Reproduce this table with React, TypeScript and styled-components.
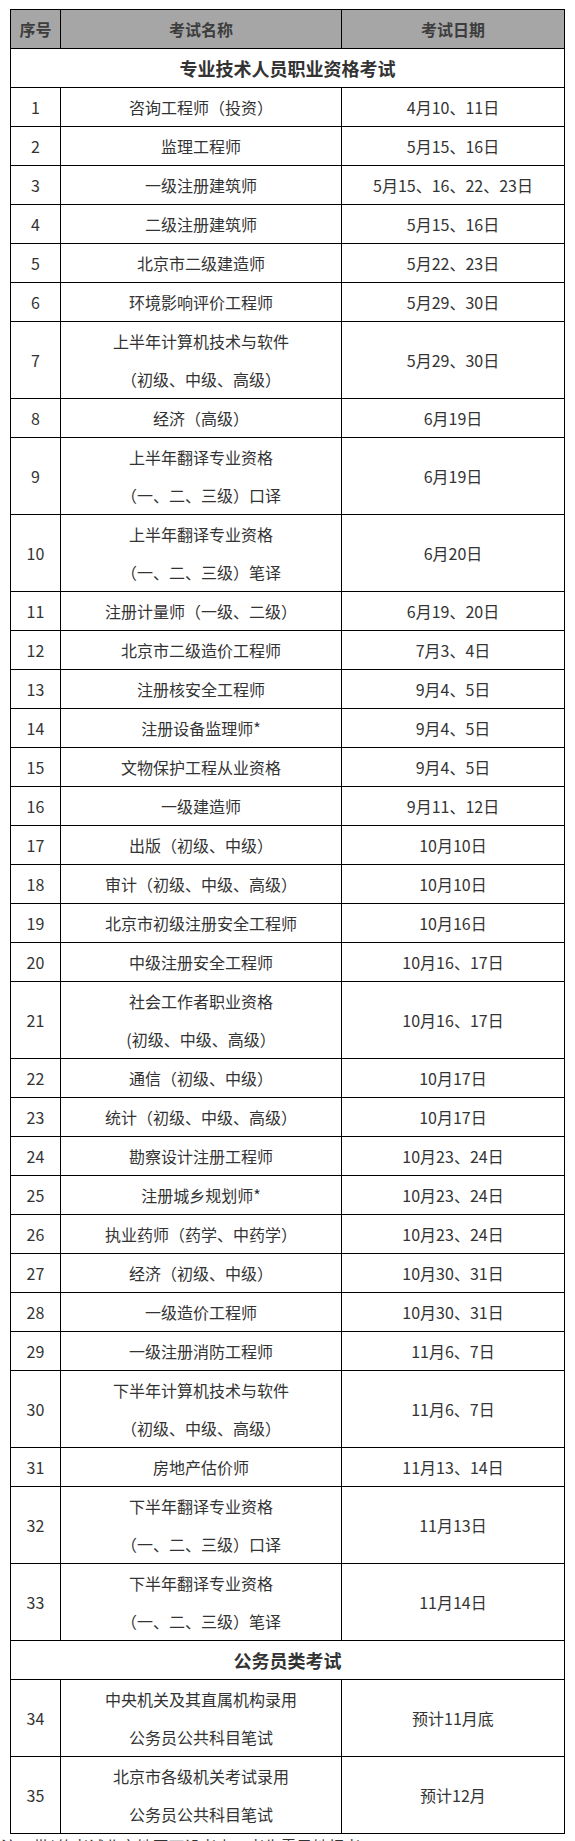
import React from "react";
import styled, { createGlobalStyle } from "styled-components";

const GlobalStyle = createGlobalStyle`
  html, body {
    margin: 0;
    padding: 0;
    background: #ffffff;
  }
  body {
    font-family: "Noto Sans CJK SC", "Microsoft YaHei", sans-serif;
    color: #333333;
  }
`;

const Page = styled.div`
  padding-top: 9px;
  width: 575px;
`;

const Grid = styled.div`
  margin-left: 10px;
  width: 555px;
  box-sizing: border-box;
  display: grid;
  grid-template-columns: 50px 281px 223px;
  border-left: 1px solid #000;
  border-top: 1px solid #000;
`;

const Cell = styled.div<{ $head?: boolean }>`
  box-sizing: border-box;
  border-right: 1px solid #000;
  border-bottom: 1px solid #000;
  min-height: 39px;
  display: flex;
  flex-direction: column;
  align-items: center;
  justify-content: center;
  text-align: center;
  font-size: 16px;
  line-height: 38px;
  white-space: nowrap;
  color: ${(p) => (p.$head ? "#3d3d3d" : "#333333")};
  font-weight: ${(p) => (p.$head ? 700 : 400)};
  background: ${(p) => (p.$head ? "#a6a6a6" : "#ffffff")};
`;

const SectionCell = styled.div`
  grid-column: 1 / span 3;
  box-sizing: border-box;
  border-right: 1px solid #000;
  border-bottom: 1px solid #000;
  height: 39px;
  display: flex;
  align-items: center;
  justify-content: center;
  font-size: 18px;
  font-weight: 700;
  color: #333333;
`;

const Line = styled.span`
  display: block;
  height: 38px;
`;

const Note = styled.p`
  margin: 0;
  padding-left: 1px;
  font-size: 16px;
  line-height: 24px;
  color: #333333;
  white-space: nowrap;
`;

type Row = { no: number; name: string[]; date: string };

const proRows: Row[] = [
  { no: 1, name: ["咨询工程师（投资）"], date: "4月10、11日" },
  { no: 2, name: ["监理工程师"], date: "5月15、16日" },
  { no: 3, name: ["一级注册建筑师"], date: "5月15、16、22、23日" },
  { no: 4, name: ["二级注册建筑师"], date: "5月15、16日" },
  { no: 5, name: ["北京市二级建造师"], date: "5月22、23日" },
  { no: 6, name: ["环境影响评价工程师"], date: "5月29、30日" },
  { no: 7, name: ["上半年计算机技术与软件", "（初级、中级、高级）"], date: "5月29、30日" },
  { no: 8, name: ["经济（高级）"], date: "6月19日" },
  { no: 9, name: ["上半年翻译专业资格", "（一、二、三级）口译"], date: "6月19日" },
  { no: 10, name: ["上半年翻译专业资格", "（一、二、三级）笔译"], date: "6月20日" },
  { no: 11, name: ["注册计量师（一级、二级）"], date: "6月19、20日" },
  { no: 12, name: ["北京市二级造价工程师"], date: "7月3、4日" },
  { no: 13, name: ["注册核安全工程师"], date: "9月4、5日" },
  { no: 14, name: ["注册设备监理师*"], date: "9月4、5日" },
  { no: 15, name: ["文物保护工程从业资格"], date: "9月4、5日" },
  { no: 16, name: ["一级建造师"], date: "9月11、12日" },
  { no: 17, name: ["出版（初级、中级）"], date: "10月10日" },
  { no: 18, name: ["审计（初级、中级、高级）"], date: "10月10日" },
  { no: 19, name: ["北京市初级注册安全工程师"], date: "10月16日" },
  { no: 20, name: ["中级注册安全工程师"], date: "10月16、17日" },
  { no: 21, name: ["社会工作者职业资格", "(初级、中级、高级）"], date: "10月16、17日" },
  { no: 22, name: ["通信（初级、中级）"], date: "10月17日" },
  { no: 23, name: ["统计（初级、中级、高级）"], date: "10月17日" },
  { no: 24, name: ["勘察设计注册工程师"], date: "10月23、24日" },
  { no: 25, name: ["注册城乡规划师*"], date: "10月23、24日" },
  { no: 26, name: ["执业药师（药学、中药学）"], date: "10月23、24日" },
  { no: 27, name: ["经济（初级、中级）"], date: "10月30、31日" },
  { no: 28, name: ["一级造价工程师"], date: "10月30、31日" },
  { no: 29, name: ["一级注册消防工程师"], date: "11月6、7日" },
  { no: 30, name: ["下半年计算机技术与软件", "（初级、中级、高级）"], date: "11月6、7日" },
  { no: 31, name: ["房地产估价师"], date: "11月13、14日" },
  { no: 32, name: ["下半年翻译专业资格", "（一、二、三级）口译"], date: "11月13日" },
  { no: 33, name: ["下半年翻译专业资格", "（一、二、三级）笔译"], date: "11月14日" },
];

const civilRows: Row[] = [
  { no: 34, name: ["中央机关及其直属机构录用", "公务员公共科目笔试"], date: "预计11月底" },
  { no: 35, name: ["北京市各级机关考试录用", "公务员公共科目笔试"], date: "预计12月" },
];

const ExamRow: React.FC<{ row: Row }> = ({ row }) => (
  <>
    <Cell>{row.no}</Cell>
    <Cell>
      {row.name.map((n, i) => (
        <Line key={i}>{n}</Line>
      ))}
    </Cell>
    <Cell>{row.date}</Cell>
  </>
);

export default function App() {
  return (
    <Page>
      <GlobalStyle />
      <Grid>
        <Cell $head>序号</Cell>
        <Cell $head>考试名称</Cell>
        <Cell $head>考试日期</Cell>
        <SectionCell>专业技术人员职业资格考试</SectionCell>
        {proRows.map((r) => (
          <ExamRow key={r.no} row={r} />
        ))}
        <SectionCell>公务员类考试</SectionCell>
        {civilRows.map((r) => (
          <ExamRow key={r.no} row={r} />
        ))}
      </Grid>
      <Note>注：带*的考试北京地区不设考点，考生需异地报考。</Note>
    </Page>
  );
}
